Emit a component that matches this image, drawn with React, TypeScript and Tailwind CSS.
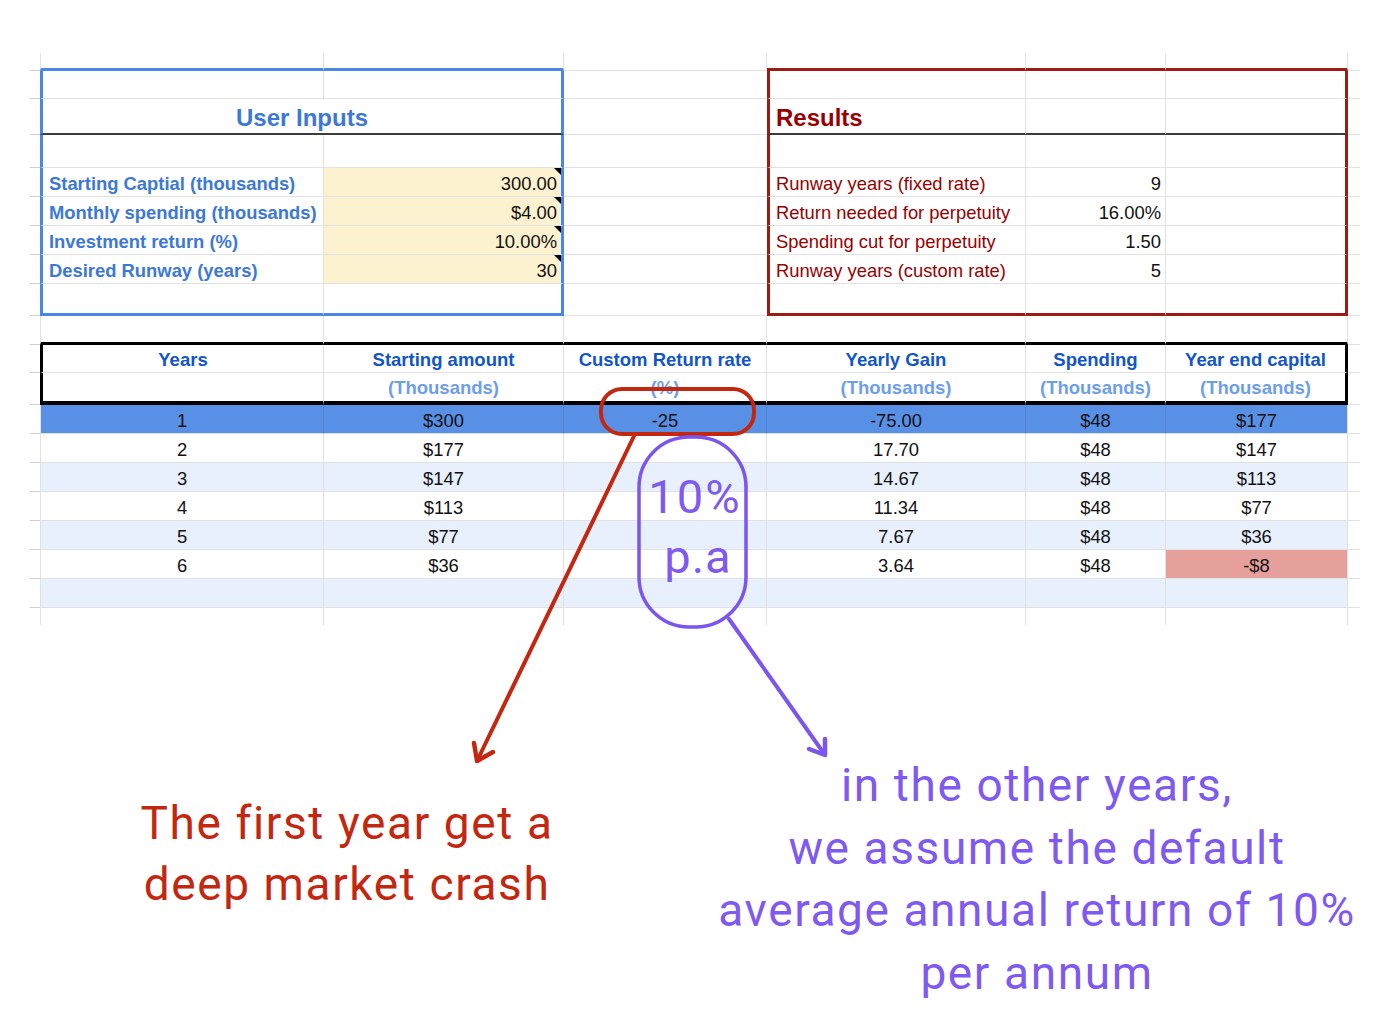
import React from "react";

type RSide = "g" | "blue" | "red" | "black" | "faint" | "none";
type BSide = "g" | "blue" | "red" | "black" | "black4" | "dark" | "none";
type LSide = "g" | "blue" | "red" | "black" | "none";

const RB: Record<RSide, string> = {
  g: "border-r border-r-[#e1e1e1]",
  blue: "border-r-[3px] border-r-[#4a86e8]",
  red: "border-r-[3px] border-r-[#9c1c12]",
  black: "border-r-[3px] border-r-black",
  faint: "border-r border-r-[#5283d0]",
  none: "",
};
const BB: Record<BSide, string> = {
  g: "border-b border-b-[#e1e1e1]",
  blue: "border-b-[3px] border-b-[#4a86e8]",
  red: "border-b-[3px] border-b-[#9c1c12]",
  black: "border-b-[3px] border-b-black",
  black4: "border-b-4 border-b-black",
  dark: "border-b-2 border-b-[#3c3c3c]",
  none: "",
};
const LB: Record<LSide, string> = {
  g: "border-l border-l-[#e1e1e1]",
  blue: "border-l-[3px] border-l-[#4a86e8]",
  red: "border-l-[3px] border-l-[#9c1c12]",
  black: "border-l-[3px] border-l-black",
  none: "",
};

const W = {
  A: "w-[284px]",
  B: "w-[240px]",
  C: "w-[203px]",
  D: "w-[259px]",
  E: "w-[140px]",
  F: "w-[182px]",
  AB: "w-[524px]",
};

type CellProps = {
  w: string;
  r?: RSide;
  b?: BSide;
  l?: LSide;
  bg?: string;
  align?: "left" | "right" | "center";
  text?: string;
  pt?: string;
  marker?: boolean;
  children?: React.ReactNode;
};

function Cell({
  w,
  r = "g",
  b = "g",
  l = "none",
  bg = "",
  align = "center",
  text = "",
  pt = "pt-[4px]",
  marker,
  children,
}: CellProps) {
  const al =
    align === "left" ? "justify-start pl-[6px]" : align === "right" ? "justify-end pr-[4px]" : "justify-center";
  return (
    <div
      className={`relative shrink-0 h-full flex items-center whitespace-nowrap ${pt} ${w} ${RB[r]} ${BB[b]} ${LB[l]} ${bg} ${al} ${text}`}
    >
      {children}
      {marker && (
        <span className="absolute top-0 right-0 w-0 h-0 border-l-[7px] border-l-transparent border-t-[7px] border-t-black" />
      )}
    </div>
  );
}

function Row({ h, children, tick = true }: { h: string; children: React.ReactNode; tick?: boolean }) {
  return (
    <div className={`flex ${h}`}>
      <div className="w-[30px] shrink-0" />
      <div className={`w-[10px] shrink-0 h-full ${tick ? "border-b border-b-[#d0d0d0]" : ""}`} />
      {children}
      <div className={`w-[12px] shrink-0 h-full ${tick ? "border-b border-b-[#e1e1e1]" : ""}`} />
    </div>
  );
}

const label = "text-[18.4px] font-bold text-[#3c78d8]";
const redLabel = "text-[18.4px] text-[#990000]";
const val = "text-[18.4px] text-[#111]";
const yellow = "bg-[#fdf2cf]";

const inputs = [
  ["Starting Captial (thousands)", "300.00", "Runway years (fixed rate)", "9"],
  ["Monthly spending (thousands)", "$4.00", "Return needed for perpetuity", "16.00%"],
  ["Investment return (%)", "10.00%", "Spending cut for perpetuity", "1.50"],
  ["Desired Runway (years)", "30", "Runway years (custom rate)", "5"],
];

const data = [
  ["1", "$300", "-25", "-75.00", "$48", "$177"],
  ["2", "$177", "", "17.70", "$48", "$147"],
  ["3", "$147", "", "14.67", "$48", "$113"],
  ["4", "$113", "", "11.34", "$48", "$77"],
  ["5", "$77", "", "7.67", "$48", "$36"],
  ["6", "$36", "", "3.64", "$48", "-$8"],
  ["", "", "", "", "", ""],
];

const hdr = "text-[18.5px] font-bold text-[#1155cc]";
const hdr2 = "text-[18.5px] font-bold text-[#6d9eeb]";
const hp = "pt-[2px]";

export default function App() {
  return (
    <div
      className="relative w-[1400px] h-[1034px] bg-white overflow-hidden"
      style={{ fontFamily: '"Liberation Sans", Arial, sans-serif' }}
    >
      <div className="pt-[53px]">
        {/* r0 */}
        <Row h="h-[18px]">
          <Cell w={W.A} l="g" b="blue" />
          <Cell w={W.B} b="blue" />
          <Cell w={W.C} />
          <Cell w={W.D} b="red" />
          <Cell w={W.E} b="red" />
          <Cell w={W.F} b="red" />
        </Row>
        {/* r1 */}
        <Row h="h-[28px]">
          <Cell w={W.A} l="blue" />
          <Cell w={W.B} r="blue" />
          <Cell w={W.C} r="none" />
          <Cell w={W.D} l="red" />
          <Cell w={W.E} />
          <Cell w={W.F} r="red" />
        </Row>
        {/* r2 */}
        <Row h="h-[36px]">
          <Cell w={W.AB} l="blue" r="blue" b="dark" text="text-[24px] font-bold text-[#3c78d8]">
            User Inputs
          </Cell>
          <Cell w={W.C} r="none" />
          <Cell w={W.D} l="red" b="dark" align="left" text="text-[24px] font-bold text-[#990000]">
            Results
          </Cell>
          <Cell w={W.E} b="dark" />
          <Cell w={W.F} r="red" b="dark" />
        </Row>
        {/* r3 */}
        <Row h="h-[33px]">
          <Cell w={W.A} l="blue" />
          <Cell w={W.B} r="blue" />
          <Cell w={W.C} r="none" />
          <Cell w={W.D} l="red" />
          <Cell w={W.E} />
          <Cell w={W.F} r="red" />
        </Row>
        {inputs.map((it, i) => (
          <Row h="h-[29px]" key={i}>
            <Cell w={W.A} l="blue" align="left" text={label}>
              {it[0]}
            </Cell>
            <Cell w={W.B} r="blue" bg={yellow} align="right" text={val} marker>
              {it[1]}
            </Cell>
            <Cell w={W.C} r="none" />
            <Cell w={W.D} l="red" align="left" text={redLabel}>
              {it[2]}
            </Cell>
            <Cell w={W.E} align="right" text={val}>
              {it[3]}
            </Cell>
            <Cell w={W.F} r="red" />
          </Row>
        ))}
        {/* r8 */}
        <Row h="h-[32px]">
          <Cell w={W.A} l="blue" b="blue" />
          <Cell w={W.B} r="blue" b="blue" />
          <Cell w={W.C} r="none" />
          <Cell w={W.D} l="red" b="red" />
          <Cell w={W.E} b="red" />
          <Cell w={W.F} r="red" b="red" />
        </Row>
        {/* r9 */}
        <Row h="h-[29px]">
          <Cell w={W.A} l="g" b="black" />
          <Cell w={W.B} b="black" />
          <Cell w={W.C} b="black" />
          <Cell w={W.D} b="black" />
          <Cell w={W.E} b="black" />
          <Cell w={W.F} b="black" />
        </Row>
        {/* header 1 */}
        <Row h="h-[28px]">
          <Cell w={W.A} l="black" text={hdr} pt={hp}>Years</Cell>
          <Cell w={W.B} text={hdr} pt={hp}>Starting amount</Cell>
          <Cell w={W.C} text={hdr} pt={hp}>Custom Return rate</Cell>
          <Cell w={W.D} text={hdr} pt={hp}>Yearly Gain</Cell>
          <Cell w={W.E} text={hdr} pt={hp}>Spending</Cell>
          <Cell w={W.F} r="black" text={hdr} pt={hp}>Year end capital</Cell>
        </Row>
        {/* header 2 */}
        <Row h="h-[32px]">
          <Cell w={W.A} l="black" b="black4" pt={hp} />
          <Cell w={W.B} b="black4" text={hdr2} pt={hp}>(Thousands)</Cell>
          <Cell w={W.C} b="black4" text={hdr2} pt={hp}>(%)</Cell>
          <Cell w={W.D} b="black4" text={hdr2} pt={hp}>(Thousands)</Cell>
          <Cell w={W.E} b="black4" text={hdr2} pt={hp}>(Thousands)</Cell>
          <Cell w={W.F} r="black" b="black4" text={hdr2} pt={hp}>(Thousands)</Cell>
        </Row>
        {data.map((d, i) => {
          const bg = i === 0 ? "bg-[#5890e6]" : i % 2 === 0 ? "bg-[#e8f0fd]" : "bg-white";
          const r: RSide = i === 0 ? "faint" : "g";
          return (
            <Row h="h-[29px]" key={i}>
              <Cell w={W.A} l="g" r={r} bg={bg} text={val}>{d[0]}</Cell>
              <Cell w={W.B} r={r} bg={bg} text={val}>{d[1]}</Cell>
              <Cell w={W.C} r={r} bg={bg} text={val}>{d[2]}</Cell>
              <Cell w={W.D} r={r} bg={bg} text={val}>{d[3]}</Cell>
              <Cell w={W.E} r={r} bg={bg} text={val}>{d[4]}</Cell>
              <Cell w={W.F} bg={i === 5 ? "bg-[#e6a09c]" : bg} text={val}>{d[5]}</Cell>
            </Row>
          );
        })}
        <Row h="h-[17px]" tick={false}>
          <Cell w={W.A} l="g" b="none" />
          <Cell w={W.B} b="none" />
          <Cell w={W.C} b="none" />
          <Cell w={W.D} b="none" />
          <Cell w={W.E} b="none" />
          <Cell w={W.F} b="none" />
        </Row>
      </div>

      {/* annotation texts */}
      <div className="flex" style={{ fontFamily: "Roboto, sans-serif" }}>
        <div className="w-[694px] shrink-0 pt-[168px] text-center text-[46px] leading-[61px] tracking-[1.6px] text-[#c4270f]">
          <div>The first year get a</div>
          <div>deep market crash</div>
        </div>
        <div className="w-[686px] shrink-0 pt-[129px] text-center text-[46px] leading-[62.5px] tracking-[1.6px] text-[#7f5af0]">
          <div>in the other years,</div>
          <div>we assume the default</div>
          <div>average annual return of 10%</div>
          <div>per annum</div>
        </div>
      </div>

      {/* overlay drawing */}
      <svg
        className="absolute left-0 top-0 pointer-events-none"
        width="1400"
        height="1034"
        viewBox="0 0 1400 1034"
        fill="none"
      >
        <rect x="601" y="389" width="153" height="45" rx="21" stroke="#c4270f" strokeWidth="4" />
        <line x1="634" y1="436" x2="477" y2="761" stroke="#c4270f" strokeWidth="4" strokeLinecap="round" />
        <polyline
          points="474,743 477,761 493,752"
          stroke="#c4270f"
          strokeWidth="4.5"
          strokeLinecap="round"
          strokeLinejoin="round"
        />
        <rect x="639" y="437" width="107" height="190" rx="50" stroke="#7b55ee" strokeWidth="3.5" />
        <line x1="729" y1="619" x2="825" y2="755" stroke="#7b55ee" strokeWidth="4" strokeLinecap="round" />
        <polyline
          points="825,739 825,755 809,749"
          stroke="#7b55ee"
          strokeWidth="4.5"
          strokeLinecap="round"
          strokeLinejoin="round"
        />
        <text
          x="695"
          y="513"
          textAnchor="middle"
          fontFamily="Roboto, sans-serif"
          fontSize="47"
          letterSpacing="2"
          fill="#7f5af0"
        >
          10%
        </text>
        <text
          x="698"
          y="573"
          textAnchor="middle"
          fontFamily="Roboto, sans-serif"
          fontSize="47"
          letterSpacing="1"
          fill="#7f5af0"
        >
          p.a
        </text>
      </svg>
    </div>
  );
}
